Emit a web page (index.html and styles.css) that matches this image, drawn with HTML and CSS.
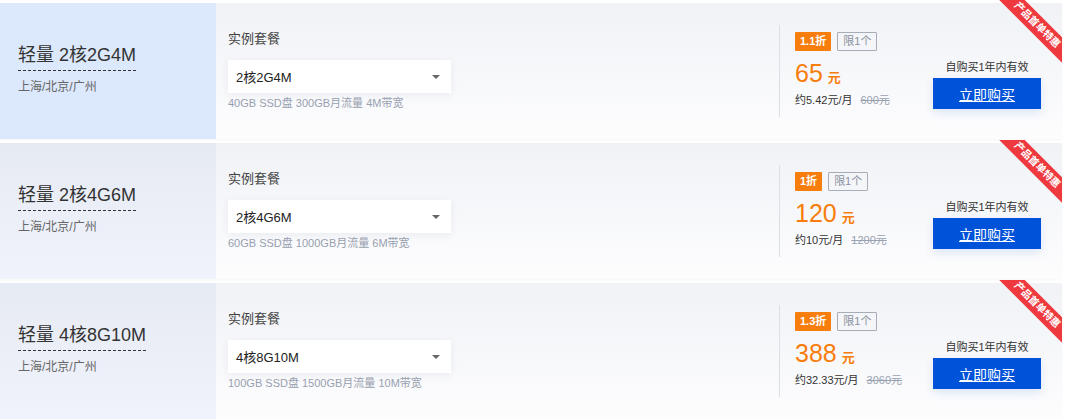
FILE: index.html
```html
<!DOCTYPE html>
<html lang="zh-CN">
<head>
<meta charset="utf-8">
<title>轻量套餐</title>
<link rel="stylesheet" href="styles.css">
</head>
<body>
<div class="list">
  <div class="card card-active">
    <div class="left">
      <div class="title">轻量 2核2G4M</div>
      <div class="loc">上海/北京/广州</div>
    </div>
    <div class="mid">
      <div class="label">实例套餐</div>
      <div class="select"><span>2核2G4M</span><i class="caret"></i></div>
      <div class="spec">40GB SSD盘 300GB月流量 4M带宽</div>
    </div>
    <div class="price">
      <div class="tags"><span class="disc">1.1折</span><span class="limit">限1个</span></div>
      <div class="amount"><span class="num">65</span><span class="unit">元</span></div>
      <div class="month">约5.42元/月<s>600元</s></div>
    </div>
    <div class="buy">
      <div class="valid">自购买1年内有效</div>
      <a class="btn">立即购买</a>
    </div>
    <div class="ribbon"><span>产品首单特惠</span></div>
  </div>
  <div class="card">
    <div class="left">
      <div class="title">轻量 2核4G6M</div>
      <div class="loc">上海/北京/广州</div>
    </div>
    <div class="mid">
      <div class="label">实例套餐</div>
      <div class="select"><span>2核4G6M</span><i class="caret"></i></div>
      <div class="spec">60GB SSD盘 1000GB月流量 6M带宽</div>
    </div>
    <div class="price">
      <div class="tags"><span class="disc">1折</span><span class="limit">限1个</span></div>
      <div class="amount"><span class="num">120</span><span class="unit">元</span></div>
      <div class="month">约10元/月<s>1200元</s></div>
    </div>
    <div class="buy">
      <div class="valid">自购买1年内有效</div>
      <a class="btn">立即购买</a>
    </div>
    <div class="ribbon"><span>产品首单特惠</span></div>
  </div>
  <div class="card">
    <div class="left">
      <div class="title">轻量 4核8G10M</div>
      <div class="loc">上海/北京/广州</div>
    </div>
    <div class="mid">
      <div class="label">实例套餐</div>
      <div class="select"><span>4核8G10M</span><i class="caret"></i></div>
      <div class="spec">100GB SSD盘 1500GB月流量 10M带宽</div>
    </div>
    <div class="price">
      <div class="tags"><span class="disc">1.3折</span><span class="limit">限1个</span></div>
      <div class="amount"><span class="num">388</span><span class="unit">元</span></div>
      <div class="month">约32.33元/月<s>3060元</s></div>
    </div>
    <div class="buy">
      <div class="valid">自购买1年内有效</div>
      <a class="btn">立即购买</a>
    </div>
    <div class="ribbon"><span>产品首单特惠</span></div>
  </div>
</div>
</body>
</html>
```
FILE: styles.css
```css
* { box-sizing: border-box; }
body {
  margin: 0;
  background: #fff;
  font-family: "Liberation Sans", "Noto Sans CJK SC", sans-serif;
  color: #333;
}
.list {
  padding-top: 3px;
  width: 1062px;
}
.card {
  position: relative;
  display: flex;
  align-items: flex-start;
  height: 136px;
  margin-bottom: 4px;
  background: linear-gradient(180deg, #f0f2f6 0%, #fdfdfe 100%);
  box-shadow: 0 1px 2px rgba(0, 0, 0, 0.04);
}
.left {
  width: 216px;
  height: 100%;
  padding: 41px 0 0 18px;
  background: linear-gradient(180deg, #e6eaf2 0%, #f0f3fc 100%);
}
.card-active .left { background: #dce8fb; }
.title {
  display: inline-block;
  font-size: 18px;
  line-height: 22px;
  padding-bottom: 4px;
  color: #333;
  border-bottom: 1px dashed #333;
}
.loc {
  margin-top: 8px;
  font-size: 12px;
  line-height: 16px;
  color: #666;
}
.mid {
  width: 563px;
  padding: 27px 0 0 12px;
}
.label {
  font-size: 13px;
  line-height: 18px;
  color: #444;
}
.select {
  margin-top: 12px;
  width: 223px;
  height: 33px;
  display: flex;
  align-items: center;
  justify-content: space-between;
  padding: 0 11px 0 8px;
  background: #fff;
  box-shadow: 0 2px 8px rgba(40, 60, 100, 0.07);
  font-size: 13px;
  color: #222;
}
.caret {
  width: 0;
  height: 0;
  border-left: 4px solid transparent;
  border-right: 4px solid transparent;
  border-top: 4px solid #666;
}
.spec {
  margin-top: 3px;
  font-size: 11px;
  line-height: 14px;
  color: #98a0b0;
}
.price {
  width: 154px;
  height: 92px;
  margin-top: 22px;
  padding: 7px 0 0 15px;
  border-left: 1px solid #dcdfe5;
}
.tags { display: flex; gap: 6px; }
.disc {
  height: 19px;
  padding: 0 5px;
  background: #f77d0c;
  color: #fff;
  font-size: 11px;
  font-weight: bold;
  line-height: 19px;
  border-radius: 1px;
}
.limit {
  height: 19px;
  padding: 0 5px;
  border: 1px solid #a7adb8;
  color: #8a919e;
  font-size: 11px;
  line-height: 17px;
  border-radius: 1px;
}
.amount {
  margin-top: 9px;
  color: #f77d0c;
  line-height: 26px;
}
.num { font-size: 25px; }
.unit { font-size: 13px; font-weight: bold; margin-left: 5px; }
.month {
  margin-top: 2px;
  font-size: 11px;
  line-height: 14px;
  color: #333;
}
.month s {
  margin-left: 8px;
  color: #9aa2b1;
}
.buy {
  width: 108px;
  margin: 58px 0 0 0;
  display: flex;
  flex-direction: column;
  align-items: center;
}
.valid {
  font-size: 11px;
  line-height: 13px;
  color: #333;
  white-space: nowrap;
}
.btn {
  margin-top: 4px;
  width: 108px;
  height: 31px;
  display: flex;
  align-items: center;
  justify-content: center;
  background: #0052d9;
  color: #fff;
  font-size: 14px;
  text-decoration: underline;
  box-shadow: 0 4px 10px rgba(0, 82, 217, 0.12);
}
.ribbon {
  position: absolute;
  top: -3px;
  right: 0;
  width: 68px;
  height: 68px;
  overflow: hidden;
}
.ribbon span {
  position: absolute;
  left: -12px;
  top: 16px;
  width: 110px;
  height: 18px;
  transform: rotate(45deg);
  background: #ee3a3f;
  color: #fff;
  font-size: 10px;
  font-weight: bold;
  line-height: 18px;
  text-align: center;
}
```
